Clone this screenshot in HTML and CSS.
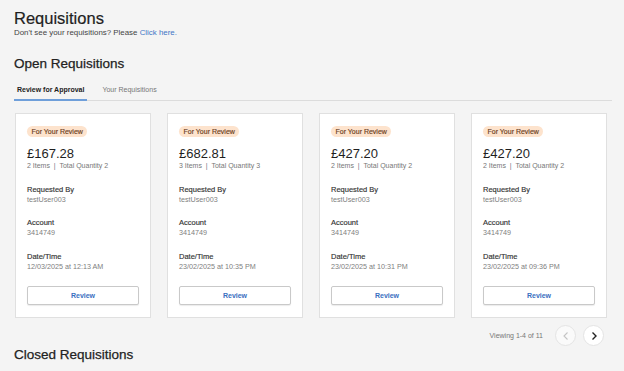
FILE: index.html
```html
<!DOCTYPE html>
<html lang="en">
<head>
    <meta charset="UTF-8">
    <meta name="viewport" content="width=device-width, initial-scale=1.0">
    <title>Requisitions</title>
    <link rel="stylesheet" href="styles.css">
</head>
<body>
    <div class="page">
        <h1 class="page-title">Requisitions</h1>
        <p class="subtitle">Don't see your requisitions? Please <a href="#" class="link">Click here.</a></p>

        <h2 class="section-title">Open Requisitions</h2>
        <div class="tabs">
            <div class="tab active">Review for Approval</div>
            <div class="tab">Your Requisitions</div>
        </div>

        <div class="cards">
            <div class="card">
                <span class="badge">For Your Review</span>
                <div class="price">£167.28</div>
                <div class="meta">2 Items &nbsp;|&nbsp; Total Quantity 2</div>
                <div class="field">
                    <div class="label">Requested By</div>
                    <div class="value">testUser003</div>
                </div>
                <div class="field">
                    <div class="label">Account</div>
                    <div class="value">3414749</div>
                </div>
                <div class="field">
                    <div class="label">Date/Time</div>
                    <div class="value">12/03/2025 at 12:13 AM</div>
                </div>
                <button class="review-button">Review</button>
            </div>
            <div class="card">
                <span class="badge">For Your Review</span>
                <div class="price">£682.81</div>
                <div class="meta">3 Items &nbsp;|&nbsp; Total Quantity 3</div>
                <div class="field">
                    <div class="label">Requested By</div>
                    <div class="value">testUser003</div>
                </div>
                <div class="field">
                    <div class="label">Account</div>
                    <div class="value">3414749</div>
                </div>
                <div class="field">
                    <div class="label">Date/Time</div>
                    <div class="value">23/02/2025 at 10:35 PM</div>
                </div>
                <button class="review-button">Review</button>
            </div>
            <div class="card">
                <span class="badge">For Your Review</span>
                <div class="price">£427.20</div>
                <div class="meta">2 Items &nbsp;|&nbsp; Total Quantity 2</div>
                <div class="field">
                    <div class="label">Requested By</div>
                    <div class="value">testUser003</div>
                </div>
                <div class="field">
                    <div class="label">Account</div>
                    <div class="value">3414749</div>
                </div>
                <div class="field">
                    <div class="label">Date/Time</div>
                    <div class="value">23/02/2025 at 10:31 PM</div>
                </div>
                <button class="review-button">Review</button>
            </div>
            <div class="card">
                <span class="badge">For Your Review</span>
                <div class="price">£427.20</div>
                <div class="meta">2 Items &nbsp;|&nbsp; Total Quantity 2</div>
                <div class="field">
                    <div class="label">Requested By</div>
                    <div class="value">testUser003</div>
                </div>
                <div class="field">
                    <div class="label">Account</div>
                    <div class="value">3414749</div>
                </div>
                <div class="field">
                    <div class="label">Date/Time</div>
                    <div class="value">23/02/2025 at 09:36 PM</div>
                </div>
                <button class="review-button">Review</button>
            </div>
        </div>

        <div class="pager">
            <span class="pager-text">Viewing 1-4 of 11</span>
            <button class="pager-button disabled" aria-label="Previous">
                <svg width="10" height="10" viewBox="0 0 10 10"><path d="M6.5 1.5 L3 5 L6.5 8.5" fill="none" stroke="#c4c4c4" stroke-width="1.1"/></svg>
            </button>
            <button class="pager-button" aria-label="Next">
                <svg width="10" height="10" viewBox="0 0 10 10"><path d="M3.5 1.5 L7 5 L3.5 8.5" fill="none" stroke="#222" stroke-width="1.4"/></svg>
            </button>
        </div>

        <h2 class="section-title closed">Closed Requisitions</h2>
    </div>
</body>
</html>
```

FILE: styles.css
```css
body {
    margin: 0;
    background: #f4f4f4;
    font-family: 'Liberation Sans', Arial, sans-serif;
    color: #222;
}

.page {
    padding: 8px 12px 0 14px;
}

/* Cabeçalho */
.page-title {
    margin: 0;
    font-size: 16.5px;
    line-height: 20px;
    font-weight: normal;
    color: #1f1f1f;
    -webkit-text-stroke: 0.2px #1f1f1f;
}

.subtitle {
    margin: 0;
    font-size: 7.9px;
    line-height: 10px;
    color: #444;
}

.link {
    color: #3d74c6;
    text-decoration: none;
}

.section-title {
    margin: 18px 0 0;
    font-size: 13.5px;
    line-height: 16px;
    font-weight: normal;
    color: #222;
    -webkit-text-stroke: 0.25px #222;
}

.section-title.closed {
    margin-top: 1px;
}

/* Abas */
.tabs {
    display: flex;
    gap: 12px;
    margin-top: 13px;
    border-bottom: 1px solid #dcdcdc;
}

.tab {
    padding: 0 3px 4px;
    font-size: 7px;
    line-height: 10px;
    color: #777;
    border-bottom: 2px solid transparent;
    margin-bottom: -1px;
}

.tab.active {
    color: #222;
    font-weight: bold;
    border-bottom-color: #6f9fda;
}

/* Cartões */
.cards {
    display: grid;
    grid-template-columns: repeat(4, 1fr);
    gap: 16px;
    margin: 12px 5px 0 1px;
}

.card {
    background: #fff;
    border: 1px solid #e0e0e0;
    padding: 12px 11px 12px;
    display: flex;
    flex-direction: column;
    align-items: flex-start;
}

.badge {
    height: 11px;
    line-height: 11px;
    padding: 0 4.5px;
    border-radius: 6px;
    background: #fde3cd;
    color: #6b3d1c;
    font-size: 7px;
    -webkit-text-stroke: 0.15px #6b3d1c;
}

.price {
    margin-top: 9px;
    font-size: 13px;
    line-height: 15px;
    color: #1f1f1f;
}

.meta {
    font-size: 7px;
    line-height: 10px;
    color: #777;
}

.field {
    margin-top: 13.5px;
}

.field:first-of-type {
    margin-top: 14px;
}

.label {
    font-size: 7.5px;
    line-height: 10px;
    color: #333;
    -webkit-text-stroke: 0.15px #333;
}

.value {
    font-size: 7.2px;
    line-height: 10px;
    color: #808080;
}

.review-button {
    margin-top: 14px;
    width: 100%;
    height: 19px;
    background: #fff;
    border: 1px solid #c9c9c9;
    border-radius: 2px;
    box-shadow: 0 1px 1px rgba(0, 0, 0, 0.08);
    color: #3a6fbf;
    font-family: inherit;
    font-size: 7px;
    font-weight: bold;
    cursor: pointer;
}

/* Paginação */
.pager {
    display: flex;
    align-items: center;
    justify-content: flex-end;
    gap: 7px;
    margin-top: 7.5px;
    padding-right: 8px;
}

.pager-text {
    font-size: 7px;
    color: #777;
    margin-right: 5px;
}

.pager-button {
    width: 21px;
    height: 21px;
    padding: 0;
    border-radius: 50%;
    border: 1px solid #e4e4e4;
    background: #fff;
    display: flex;
    align-items: center;
    justify-content: center;
    cursor: pointer;
}

.pager-button.disabled {
    background: #fafafa;
    cursor: default;
}
```
